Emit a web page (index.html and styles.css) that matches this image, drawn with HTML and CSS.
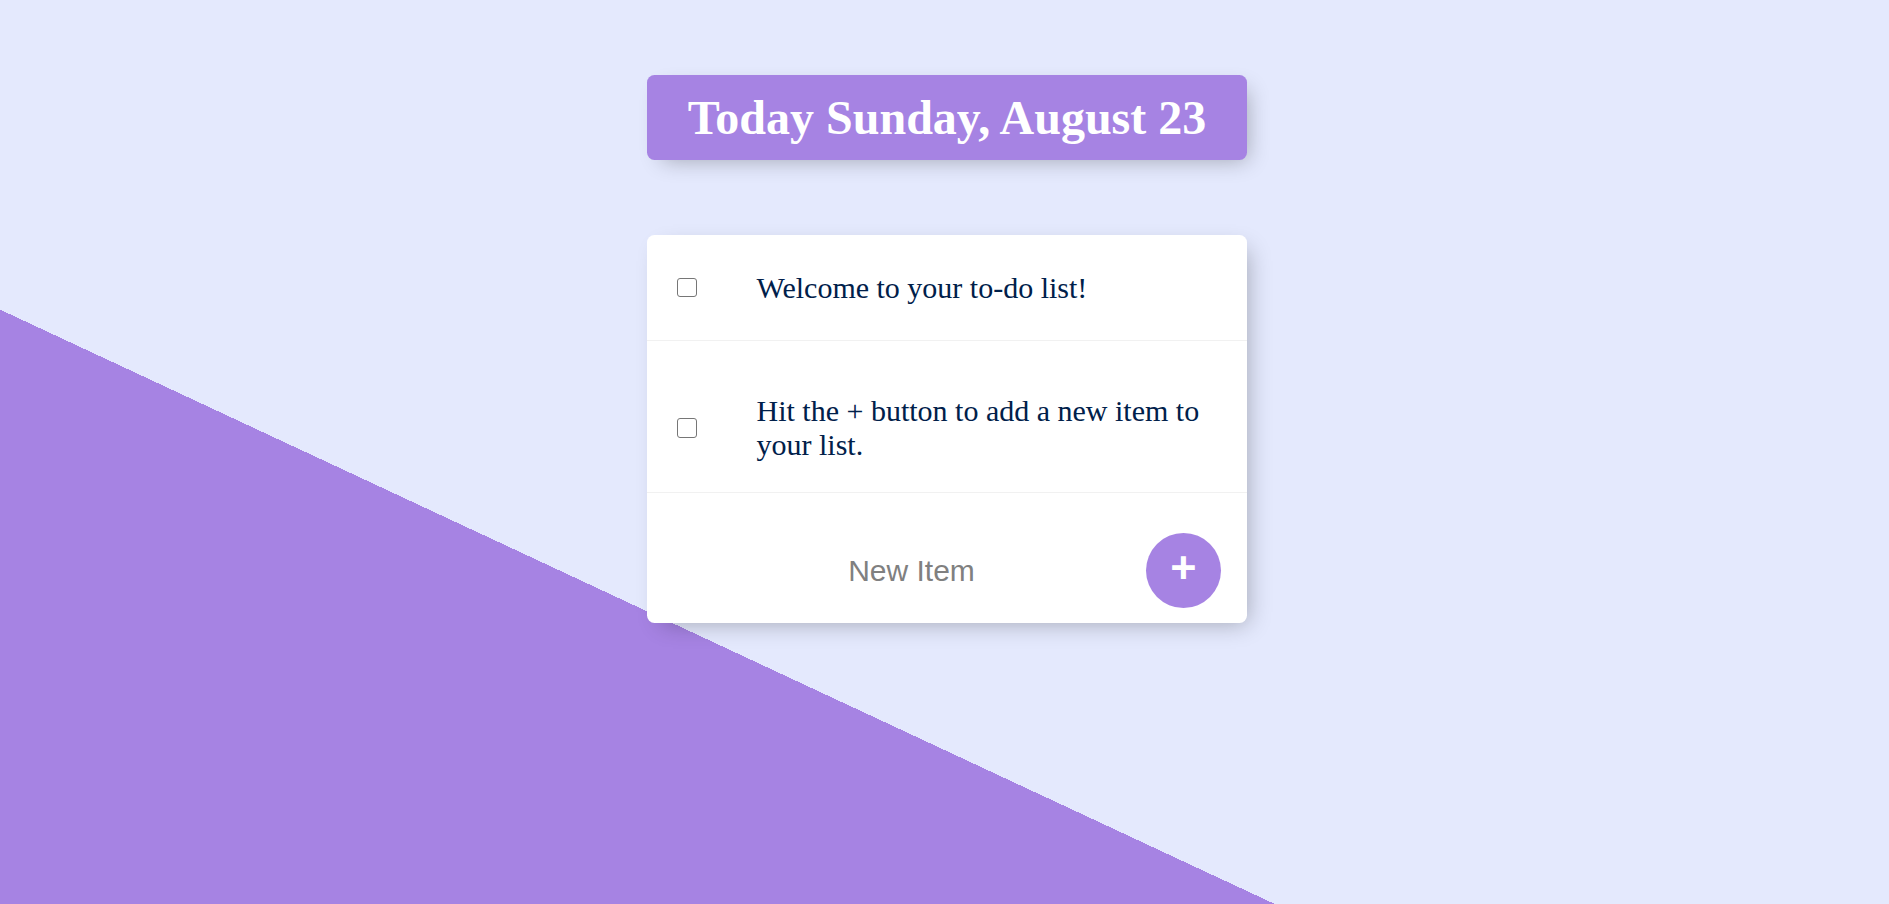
FILE: index.html
```html
<!DOCTYPE html>
<html lang="en">
<head>
<meta charset="utf-8">
<title>To-Do List</title>
<link rel="stylesheet" href="styles.css">
</head>
<body>
  <div class="box heading">
    <h1 class="title">Today Sunday, August 23</h1>
  </div>
  <div class="box list">
    <div class="item">
      <input class="check" type="checkbox">
      <p class="text">Welcome to your to-do list!</p>
    </div>
    <div class="item item-tall">
      <input class="check" type="checkbox">
      <p class="text">Hit the + button to add a new item to your list.</p>
    </div>
    <form class="item item-new">
      <input class="new-input" type="text" name="newItem" placeholder="New Item" autocomplete="off">
      <button class="add-btn" type="button">+</button>
    </form>
  </div>
</body>
</html>
```

FILE: styles.css
```css
html {
  background-color: #E4E9FD;
  background-image: linear-gradient(25deg, #A683E3 50%, #E4E9FD 50%);
  min-height: 1500px;
  overflow: hidden;
}

body {
  margin: 0 9.5px 0 14.5px;
  padding-top: 1px;
  font-family: "Liberation Serif", "Times New Roman", serif;
}

.box {
  max-width: 600px;
  margin: 74px auto 75px;
  background: #ffffff;
  border-radius: 7.5px;
  box-shadow: 7.5px 7.5px 22.5px -7.5px rgba(0, 0, 0, 0.3);
}

.heading {
  background-color: #A683E3;
  text-align: center;
}

.title {
  margin: 0;
  padding: 15px;
  color: #ffffff;
  font-size: 48px;
  font-weight: bold;
  font-family: "Liberation Serif", "Times New Roman", serif;
}

.item {
  min-height: 105px;
  display: flex;
  align-items: center;
  border-bottom: 1.5px solid #F1F1F1;
}

.item:last-child {
  border-bottom: 0;
}

.item-tall {
  padding-top: 23px;
}

.check {
  appearance: none;
  -webkit-appearance: none;
  flex: none;
  box-sizing: border-box;
  width: 19.5px;
  height: 19.5px;
  margin: 30px;
  border: 1.5px solid #767676;
  border-radius: 3px;
  background: #ffffff;
}

.text {
  margin: 0;
  padding: 30px;
  font-size: 30px;
  font-weight: 200;
  color: #00204a;
}

.item-new {
  margin-left: 30px;
  padding-top: 25px;
  text-align: center;
}

.new-input {
  text-align: center;
  box-sizing: border-box;
  width: 469px;
  height: 90px;
  padding: 0;
  border: none;
  background: transparent;
  font-family: "Liberation Sans", Arial, sans-serif;
  font-size: 30px;
  font-weight: 200;
  color: #000;
  outline: none;
}

.new-input::placeholder {
  color: grey;
  opacity: 1;
}

.add-btn {
  flex: none;
  box-sizing: border-box;
  width: 75px;
  height: 75px;
  border-radius: 50%;
  border: 0;
  background-color: #A683E3;
  color: #ffffff;
  font-family: "Liberation Sans", Arial, sans-serif;
  font-size: 45px;
  font-weight: bold;
  line-height: 1;
  padding: 0 0 7px 0;
}
```
